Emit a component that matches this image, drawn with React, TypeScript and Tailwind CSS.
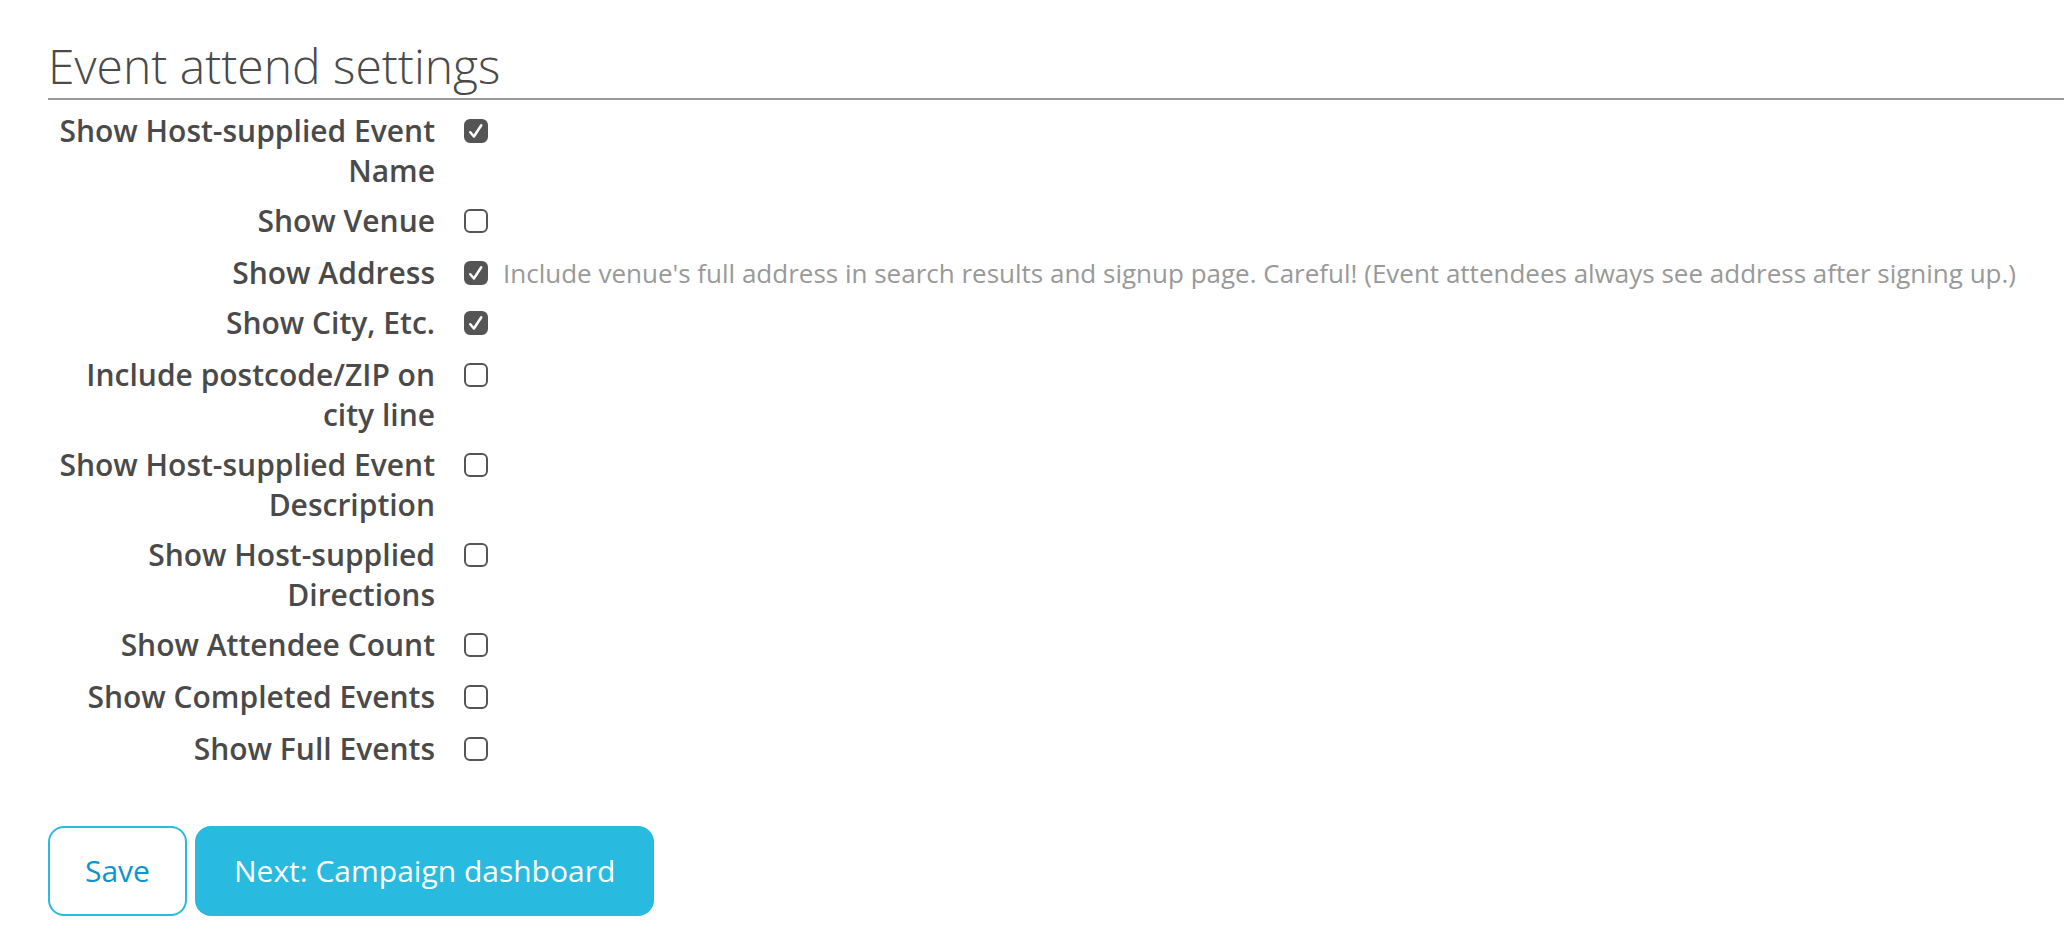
const settings = [
  { id: 'event_name', label: 'Show Host-supplied Event Name', checked: true },
  { id: 'venue', label: 'Show Venue', checked: false },
  {
    id: 'address',
    label: 'Show Address',
    checked: true,
    help: "Include venue's full address in search results and signup page. Careful! (Event attendees always see address after signing up.)",
  },
  { id: 'city', label: 'Show City, Etc.', checked: true },
  { id: 'zip', label: 'Include postcode/ZIP on city line', checked: false },
  { id: 'description', label: 'Show Host-supplied Event Description', checked: false },
  { id: 'directions', label: 'Show Host-supplied Directions', checked: false },
  { id: 'attendee_count', label: 'Show Attendee Count', checked: false },
  { id: 'completed', label: 'Show Completed Events', checked: false },
  { id: 'full', label: 'Show Full Events', checked: false },
];

function Checkbox({ id, checked }: { id: string; checked: boolean }) {
  return (
    <span className="mt-2 grid size-6 shrink-0">
      <input
        type="checkbox"
        id={id}
        defaultChecked={checked}
        className="peer col-start-1 row-start-1 size-6 appearance-none rounded-[6px] border-2 border-[#555] bg-white checked:bg-[#555]"
      />
      <svg
        viewBox="0 0 24 24"
        className="pointer-events-none invisible col-start-1 row-start-1 size-6 fill-none stroke-white stroke-[2.5] peer-checked:visible"
      >
        <path d="M6.3 13.3l3.6 4.2L17.3 6.3" strokeLinecap="round" strokeLinejoin="round" />
      </svg>
    </span>
  );
}

export default function App() {
  return (
    <main className="min-h-screen bg-white pt-9 pl-12 font-['Open_Sans',sans-serif] text-[#4a4a4a]">
      <form>
        <h2 className="border-b-2 border-[#999] pb-[2px] text-[48px] leading-[60px] font-light">Event attend settings</h2>
        <div className="mt-[11px] mb-[55px] space-y-[10px]">
          {settings.map((s) => (
            <div key={s.id} className="flex items-start">
              <label htmlFor={s.id} className="w-[387px] shrink-0 text-right text-[30px] leading-10 font-semibold">
                {s.label}
              </label>
              {/* help text sets its own line height, bare checkboxes sit in a taller line */}
              <div className={s.help ? 'ml-[29px] flex gap-[15px]' : 'ml-[29px] flex min-h-[42px]'}>
                <Checkbox id={s.id} checked={s.checked} />
                {s.help && <p className="text-[26px] leading-10 text-[#999]">{s.help}</p>}
              </div>
            </div>
          ))}
        </div>
        <div className="flex gap-2">
          <button type="button" className="rounded-2xl border-2 border-[#28badf] px-[35px] py-[23px] text-[30px] leading-10 text-[#0b94d0]">
            Save
          </button>
          <button type="button" className="rounded-2xl bg-[#28badf] px-[39px] py-[25px] text-[30px] leading-10 text-white">
            Next: Campaign dashboard
          </button>
        </div>
      </form>
    </main>
  );
}
